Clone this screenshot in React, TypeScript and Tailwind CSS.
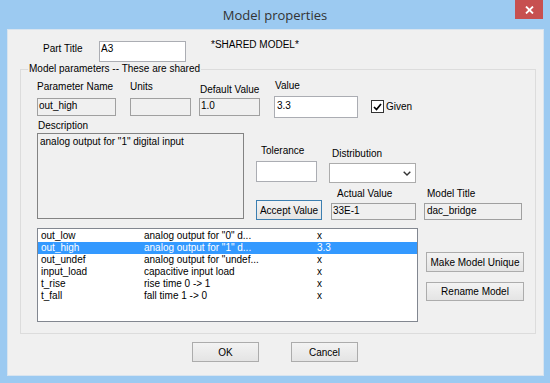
import React from "react";

const rows = [
  ["out_low", 'analog output for "0" d...', "x"],
  ["out_high", 'analog output for "1" d...', "3.3"],
  ["out_undef", 'analog output for "undef...', "x"],
  ["input_load", "capacitive input load", "x"],
  ["t_rise", "rise time 0 -> 1", "x"],
  ["t_fall", "fall time 1 -> 0", "x"],
];

function Btn({ children, className = "" }: { children: React.ReactNode; className?: string }) {
  return (
    <div
      className={
        "flex items-center justify-center border bg-linear-to-b from-[#f3f3f3] to-[#e4e4e4] text-black " +
        className
      }
    >
      {children}
    </div>
  );
}

export default function App() {
  return (
    <div className="w-[550px] h-[383px] bg-[#9ccaf1] flex flex-col font-['Liberation_Sans',Arial,sans-serif] text-[10px] leading-[13px] text-black">
      {/* title bar */}
      <div className="h-[29px] relative flex items-center justify-center">
        <span className="font-['Open_Sans',sans-serif] text-[13px] text-[#333] mt-[2px]">Model properties</span>
        <div className="absolute right-[7px] top-0 w-[28px] h-[19px] bg-[#c75050] flex items-center justify-center">
          <svg width="9" height="8" viewBox="0 0 9 8">
            <path d="M1 0.5 L8 7.5 M8 0.5 L1 7.5" stroke="white" strokeWidth="1.8" />
          </svg>
        </div>
      </div>
      {/* body */}
      <div className="flex-1 flex pl-[7px] pr-[6px] pb-[7px]">
        <div className="flex-1 border border-[#d8e4ef] bg-[#f0f0f0] flex flex-col">
          {/* Part title row */}
          <div className="flex items-start mt-[11px] pl-[35px]">
            <div className="w-[56px] mt-[1px]">Part Title</div>
            <div className="w-[87px] h-[21px] border border-[#abadb3] bg-white pl-[1px]">A3</div>
            <div className="ml-[25px] -mt-[3px]">*SHARED MODEL*</div>
          </div>

          {/* group box */}
          <div className="mt-[7px] ml-[12px] w-[516px] h-[265px] border border-[#dcdcdc] relative flex flex-col">
            <div className="absolute left-[7px] -top-[8px] px-[1px] bg-[#f0f0f0]">
              Model parameters -- These are shared
            </div>

            {/* Row A */}
            <div className="flex items-start pl-[16px]">
              <div className="flex flex-col mt-[10px] w-[79px]">
                <div className="whitespace-nowrap">Parameter Name</div>
                <div className="mt-[5px] h-[18px] border border-[#a0a0a0] bg-[#f0f0f0] pl-[1px]">out_high</div>
              </div>
              <div className="flex flex-col mt-[10px] ml-[14px] w-[61px]">
                <div>Units</div>
                <div className="mt-[5px] h-[18px] border border-[#a0a0a0] bg-[#f0f0f0]"></div>
              </div>
              <div className="flex flex-col mt-[13px] ml-[8px] w-[61px]">
                <div className="pl-[1px] whitespace-nowrap">Default Value</div>
                <div className="mt-[2px] h-[18px] border border-[#a0a0a0] bg-[#f0f0f0] pl-[1px]">1.0</div>
              </div>
              <div className="flex flex-col mt-[9px] ml-[14px] w-[84px]">
                <div className="pl-[1px]">Value</div>
                <div className="mt-[4px] h-[22px] border border-[#abadb3] bg-white pl-[2px] pt-[2px]">3.3</div>
              </div>
              <div className="flex items-center mt-[30px] ml-[13px]">
                <div className="w-[13px] h-[13px] border border-[#333] bg-white flex items-center justify-center">
                  <svg width="9" height="8" viewBox="0 0 9 8">
                    <path d="M1 4 L3.5 6.5 L8 1" stroke="black" strokeWidth="1.7" fill="none" />
                  </svg>
                </div>
                <div className="ml-[2px]">Given</div>
              </div>
            </div>

            {/* Row B */}
            <div className="flex items-start">
              <div className="flex flex-col pl-[16px] mt-[1px]">
                <div className="pl-[1px]">Description</div>
                <div className="mt-[1px] w-[207px] h-[86px] border border-[#838383] bg-[#f0f0f0] pl-[2px] pt-[1px]">
                  analog output for "1" digital input
                </div>
              </div>
              <div className="flex flex-col ml-[12px]">
                <div className="flex items-start h-[65px]">
                  <div className="flex flex-col mt-[26px] w-[61px]">
                    <div className="pl-[5px]">Tolerance</div>
                    <div className="mt-[4px] h-[21px] border border-[#abadb3] bg-white"></div>
                  </div>
                  <div className="flex flex-col mt-[29px] ml-[12px] w-[87px]">
                    <div className="pl-[3px]">Distribution</div>
                    <div className="mt-[3px] h-[20px] border border-[#acacac] bg-white flex items-center justify-end pr-[4px]">
                      <svg width="8" height="5" viewBox="0 0 8 5">
                        <path d="M0.7 0.7 L4 4 L7.3 0.7" stroke="#333" strokeWidth="1.4" fill="none" />
                      </svg>
                    </div>
                  </div>
                </div>
                <div className="flex items-start">
                  <Btn className="mt-[17px] w-[66px] h-[20px] border-[#3c7fb1]">Accept Value</Btn>
                  <div className="flex flex-col mt-[4px] ml-[9px] w-[85px]">
                    <div className="pl-[6px]">Actual Value</div>
                    <div className="mt-[3px] h-[17px] border border-[#a0a0a0] bg-[#f0f0f0] pl-[1px]">33E-1</div>
                  </div>
                  <div className="flex flex-col mt-[4px] ml-[8px] w-[98px]">
                    <div className="pl-[3px]">Model Title</div>
                    <div className="mt-[3px] h-[17px] border border-[#a0a0a0] bg-[#f0f0f0] pl-[2px]">dac_bridge</div>
                  </div>
                </div>
              </div>
            </div>

            {/* Row C */}
            <div className="flex items-start mt-[8px] pl-[16px]">
              <div className="w-[381px] h-[94px] border border-[#828790] bg-white pt-[1px] flex flex-col">
                {rows.map((r, i) => (
                  <div
                    key={r[0]}
                    className={
                      "flex h-[12px] leading-[12px] pl-[3px] " +
                      (i === 1 ? "bg-[#3399ff] text-white" : "")
                    }
                  >
                    <div className="w-[103px]">{r[0]}</div>
                    <div className="w-[173px]">{r[1]}</div>
                    <div>{r[2]}</div>
                  </div>
                ))}
              </div>
              <div className="flex flex-col ml-[8px] w-[98px]">
                <Btn className="mt-[24px] h-[20px] border-[#acacac]">Make Model Unique</Btn>
                <Btn className="mt-[10px] h-[19px] border-[#acacac]">Rename Model</Btn>
              </div>
            </div>
          </div>

          {/* OK / Cancel */}
          <div className="flex mt-[8px] pl-[184px]">
            <Btn className="w-[67px] h-[20px] border-[#acacac]">OK</Btn>
            <Btn className="ml-[32px] w-[67px] h-[20px] border-[#acacac]">Cancel</Btn>
          </div>
        </div>
      </div>
    </div>
  );
}
